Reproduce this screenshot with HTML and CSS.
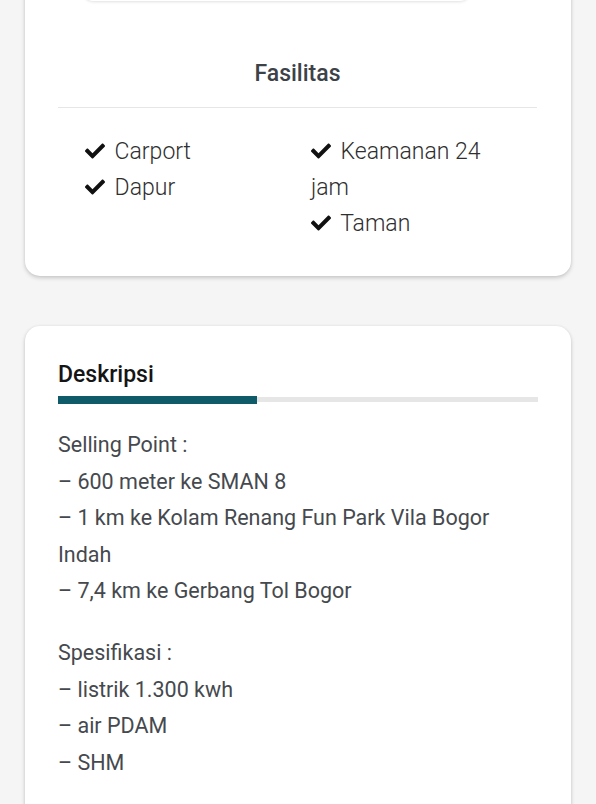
FILE: index.html
```html
<!DOCTYPE html>
<html lang="id">
<head>
<meta charset="utf-8">
<title>Detail Properti</title>
<link rel="stylesheet" href="styles.css">
</head>
<body>
<main class="page">
  <section class="card card-facilities">
    <div class="media-box"></div>
    <h2 class="facilities-title">Fasilitas</h2>
    <div class="facilities">
      <ul class="fac-col">
        <li><svg class="check" viewBox="0 0 512 512"><path d="M173.898 439.404l-166.4-166.4c-9.997-9.997-9.997-26.206 0-36.204l36.203-36.204c9.997-9.998 26.207-9.998 36.204 0L192 312.69 432.095 72.596c9.997-9.997 26.207-9.997 36.204 0l36.203 36.204c9.997 9.997 9.997 26.206 0 36.204l-294.4 294.401c-9.998 9.997-26.207 9.997-36.204-.001z"/></svg> Carport</li>
        <li><svg class="check" viewBox="0 0 512 512"><path d="M173.898 439.404l-166.4-166.4c-9.997-9.997-9.997-26.206 0-36.204l36.203-36.204c9.997-9.998 26.207-9.998 36.204 0L192 312.69 432.095 72.596c9.997-9.997 26.207-9.997 36.204 0l36.203 36.204c9.997 9.997 9.997 26.206 0 36.204l-294.4 294.401c-9.998 9.997-26.207 9.997-36.204-.001z"/></svg> Dapur</li>
      </ul>
      <ul class="fac-col fac-col-b">
        <li><svg class="check" viewBox="0 0 512 512"><path d="M173.898 439.404l-166.4-166.4c-9.997-9.997-9.997-26.206 0-36.204l36.203-36.204c9.997-9.998 26.207-9.998 36.204 0L192 312.69 432.095 72.596c9.997-9.997 26.207-9.997 36.204 0l36.203 36.204c9.997 9.997 9.997 26.206 0 36.204l-294.4 294.401c-9.998 9.997-26.207 9.997-36.204-.001z"/></svg> Keamanan 24 jam</li>
        <li><svg class="check" viewBox="0 0 512 512"><path d="M173.898 439.404l-166.4-166.4c-9.997-9.997-9.997-26.206 0-36.204l36.203-36.204c9.997-9.998 26.207-9.998 36.204 0L192 312.69 432.095 72.596c9.997-9.997 26.207-9.997 36.204 0l36.203 36.204c9.997 9.997 9.997 26.206 0 36.204l-294.4 294.401c-9.998 9.997-26.207 9.997-36.204-.001z"/></svg> Taman</li>
      </ul>
    </div>
  </section>

  <section class="card card-desc">
    <h2 class="desc-title">Deskripsi</h2>
    <div class="title-bar"><span class="title-bar-fill"></span></div>
    <p class="desc-text">Selling Point :<br>– 600 meter ke SMAN 8<br>– 1 km ke Kolam Renang Fun Park Vila Bogor Indah<br>– 7,4 km ke Gerbang Tol Bogor</p>
    <p class="desc-text">Spesifikasi :<br>– listrik 1.300 kwh<br>– air PDAM<br>– SHM</p>
  </section>
</main>
</body>
</html>
```
FILE: styles.css
```css
* { box-sizing: border-box; }
html, body { margin: 0; padding: 0; }
body {
  background: #f5f5f5;
  font-family: Roboto, "Liberation Sans", sans-serif;
  overflow: hidden;
}
.page {
  display: flex;
  flex-direction: column;
  gap: 50px;
  padding: 0 25px;
  margin-top: -60px;
}
.card {
  background: #fff;
  border-radius: 15px;
  box-shadow: 0 2px 4px rgba(0,0,0,0.18), 0 0 3px rgba(0,0,0,0.06);
}
.card-facilities {
  padding: 0 34px 34px 33px;
}
.media-box {
  margin-left: 25px;
  width: 387px;
  height: 61px;
  border-radius: 10px;
  background: #fff;
  box-shadow: 0 1px 3px rgba(0,0,0,0.12);
}
.facilities-title {
  margin: 58px 0 0;
  padding-bottom: 18px;
  border-bottom: 1px solid #e6e6e6;
  text-align: center;
  font-size: 23px;
  line-height: 30px;
  font-weight: 500;
  color: #3d4249;
}
.facilities {
  display: flex;
  margin-top: 26px;
  padding-left: 27px;
  font-size: 23px;
  line-height: 36px;
  font-weight: 300;
  color: #2f2f2f;
}
.fac-col {
  list-style: none;
  margin: 0;
  padding: 0;
  width: 226px;
}
.fac-col-b { width: 200px; }
.check {
  width: 20px;
  height: 20px;
  vertical-align: -2px;
  margin-right: 4px;
  fill: #111;
}
.card-desc {
  padding: 34px 33px 60px;
}
.desc-title {
  margin: 0;
  font-size: 23px;
  line-height: 30px;
  font-weight: 500;
  color: #151515;
}
.title-bar {
  margin-top: 6px;
  height: 8px;
  display: flex;
  align-items: center;
  background: linear-gradient(#fff 0 1.5px, #e6e6e6 1.5px 6.5px, #fff 6.5px);
}
.title-bar-fill {
  display: block;
  width: 199px;
  height: 8px;
  background: #0f5b69;
}
.desc-text {
  margin: 23px 0 0;
  font-size: 21.5px;
  line-height: 36.6px;
  color: #45494e;
}
.desc-text + .desc-text { margin-top: 25px; }
```
